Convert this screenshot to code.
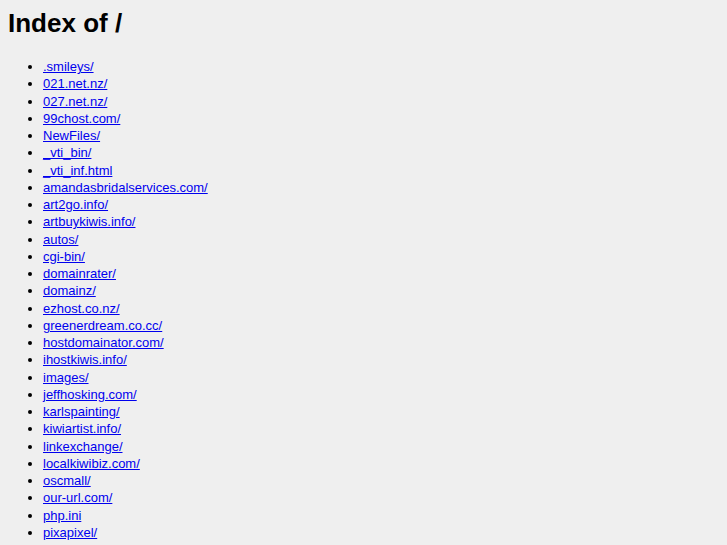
const entries = [
  '.smileys/',
  '021.net.nz/',
  '027.net.nz/',
  '99chost.com/',
  'NewFiles/',
  '_vti_bin/',
  '_vti_inf.html',
  'amandasbridalservices.com/',
  'art2go.info/',
  'artbuykiwis.info/',
  'autos/',
  'cgi-bin/',
  'domainrater/',
  'domainz/',
  'ezhost.co.nz/',
  'greenerdream.co.cc/',
  'hostdomainator.com/',
  'ihostkiwis.info/',
  'images/',
  'jeffhosking.com/',
  'karlspainting/',
  'kiwiartist.info/',
  'linkexchange/',
  'localkiwibiz.com/',
  'oscmall/',
  'our-url.com/',
  'php.ini',
  'pixapixel/',
  'robots.txt',
];

export default function App() {
  return (
    <div
      className="min-h-screen bg-[#efefef] p-[8px] text-black"
      style={{ fontFamily: '"Liberation Sans", Arial, sans-serif' }}
    >
      <h1 className="text-[26px] font-bold leading-[30px] mb-[20px]">Index of /</h1>
      <ul className="list-disc pl-[35px] text-[13px] leading-[17.25px]">
        {entries.map((name) => (
          <li key={name}>
            <a href={name} className="text-[#0000ee] underline">
              {name}
            </a>
          </li>
        ))}
      </ul>
    </div>
  );
}
